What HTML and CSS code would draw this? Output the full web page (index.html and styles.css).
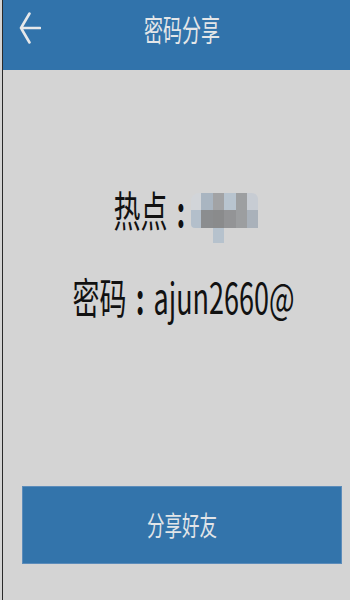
FILE: index.html
```html
<!DOCTYPE html>
<html lang="zh">
<head>
<meta charset="utf-8">
<link rel="stylesheet" href="styles.css">
</head>
<body>
<div class="frame">
  <header class="topbar">
    <svg class="back" width="22" height="32" viewBox="0 0 22 32">
      <path d="M10.5 1.5 L2 16 L10.5 30.5 M2 16 H21" fill="none" stroke="#e6e8ea" stroke-width="2.6" stroke-linecap="round" stroke-linejoin="round"/>
    </svg>
    <div class="title"><span class="tall">密码分享</span></div>
  </header>
  <main class="content">
    <div class="line line-hotspot">
      <span class="tall big">热点<span class="colon">:</span></span><span class="mosaic">
        <i class="c1"></i><i class="c2"></i><i class="c3"></i><i class="c4"></i><i class="c5"></i><i class="c6"></i>
        <i class="d1"></i><i class="d2"></i><i class="d3"></i><i class="d4"></i><i class="d5"></i><i class="d6"></i>
        <i class="e0"></i><i class="e0"></i><i class="e3"></i><i class="e0"></i><i class="e0"></i><i class="e0"></i>
      </span>
    </div>
    <div class="line line-pass">
      <span class="tall big">密码<span class="colon">:</span>ajun2660@</span>
    </div>
    <button class="share"><span class="tall">分享好友</span></button>
  </main>
</div>
</body>
</html>
```
FILE: styles.css
```css
html, body {
  margin: 0;
  padding: 0;
  height: 100%;
}
body {
  background: #d4d4d4;
  padding-left: 2px;
  box-sizing: border-box;
  font-family: "Noto Sans CJK SC", "Noto Sans", sans-serif;
  overflow: hidden;
}
.frame {
  border-left: 1px solid #2a2a2a;
  height: 600px;
  box-sizing: border-box;
}
.topbar {
  height: 70px;
  background: #3173ab;
  display: flex;
  align-items: flex-start;
  position: relative;
}
.back {
  position: absolute;
  left: 16px;
  top: 12px;
}
.title {
  flex: 1;
  text-align: center;
  padding-left: 11px;
  margin-top: 14px;
  height: 30px;
  line-height: 30px;
  font-size: 19px;
  color: #e4e6e8;
}
.tall {
  display: inline-block;
  transform: scaleY(1.55);
}
.content {
  padding-left: 14px;
  display: flex;
  flex-direction: column;
  align-items: center;
}
.line {
  height: 44px;
  line-height: 44px;
  display: flex;
  align-items: center;
  justify-content: center;
  color: #111;
}
.big {
  font-size: 27px;
}
.colon {
  display: inline-block;
  width: 27px;
  text-align: center;
  font-weight: bold;
}
.line-hotspot {
  margin-top: 118px;
  padding-left: 4px;
}
.line-pass {
  margin-top: 43px;
}
.mosaic {
  display: grid;
  grid-template-columns: 10px 12px 11px 12px 11px 11px;
  grid-template-rows: 17px 18px 15px;
  margin-top: 16px;
  margin-left: -4px;
}
.mosaic i { display: block; }
.c1 { background: #d2d5d9; border-top-left-radius: 8px; }
.c2 { background: #a9b5c1; }
.c3 { background: #a2a3a5; }
.c4 { background: #b8c4cf; }
.c5 { background: #9d9fa1; }
.c6 { background: #c7ccd3; border-top-right-radius: 6px; }
.d1 { background: #b3bfcb; border-bottom-left-radius: 4px; }
.d2 { background: #8b8d8f; }
.d3 { background: #8a8b8c; }
.d4 { background: #939496; }
.d5 { background: #9c9ea0; }
.d6 { background: #a9b1ba; }
.e0 { background: transparent; }
.e3 { background: #b6c2cd; }
.share {
  margin-top: 167px;
  margin-left: 5px;
  margin-right: 8px;
  align-self: stretch;
  height: 78px;
  background: #3374ab;
  border: 1px solid #5c8cba;
  color: #e2e5e8;
  font-family: "Noto Sans CJK SC", "Noto Sans", sans-serif;
  font-size: 17.5px;
  padding: 0;
  padding-bottom: 2px;
  cursor: pointer;
}
```
